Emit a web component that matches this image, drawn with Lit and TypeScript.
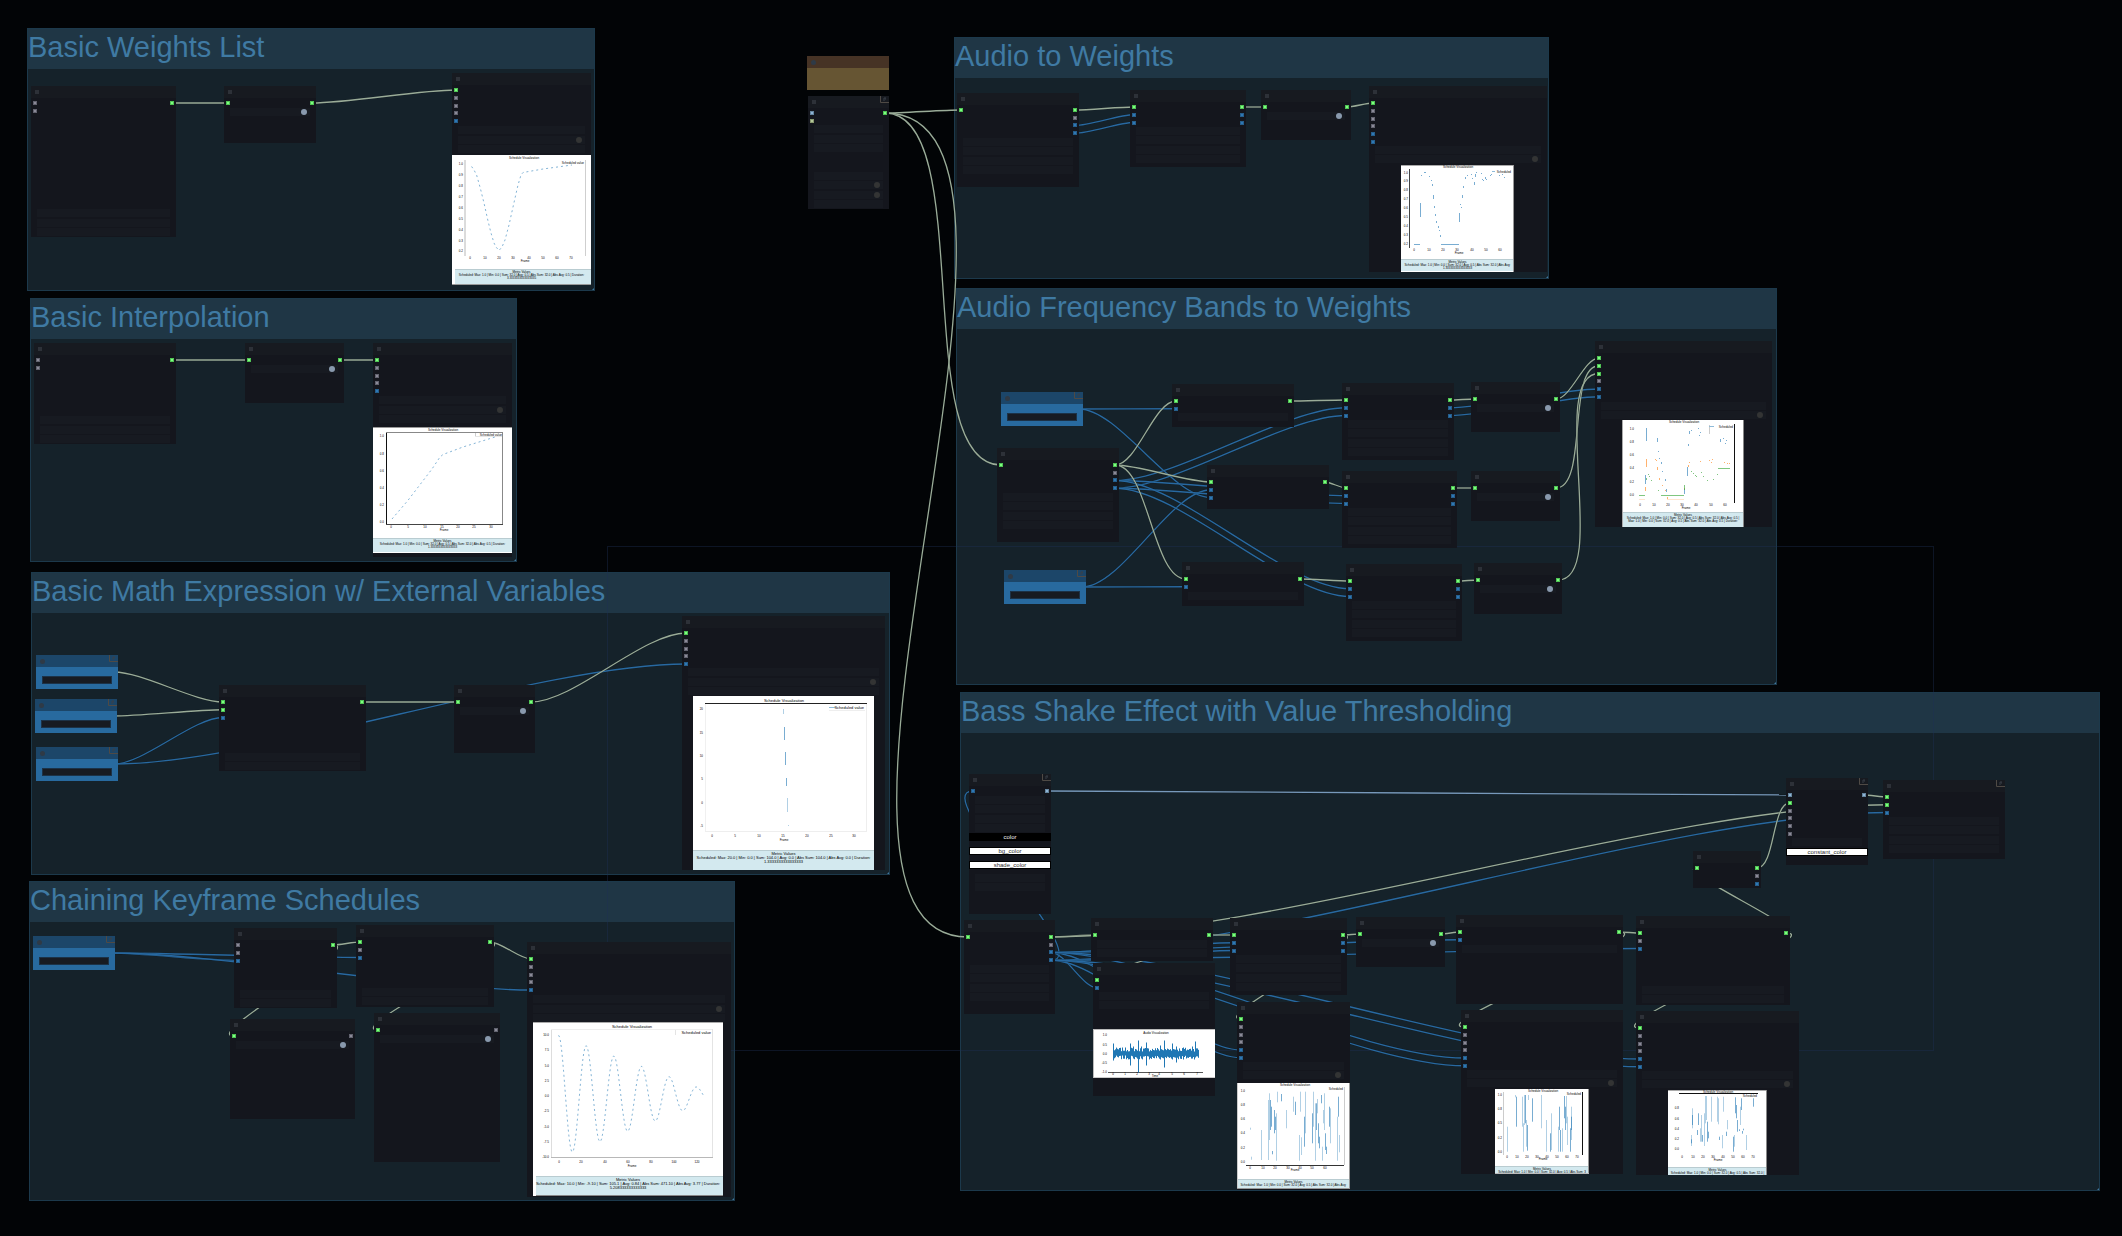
import { LitElement, html, svg, css, nothing } from "lit";
import { customElement, property } from "lit/decorators.js";
import { classMap } from "lit/directives/class-map.js";
import { styleMap } from "lit/directives/style-map.js";

type Kind = "op" | "value" | "note";

interface NodeSpec {
  id: string;
  x: number;
  y: number;
  w: number;
  h: number;
  kind?: Kind;
  /** One letter per slot: g = weights, n = unconnected, b = number, l = mask, k = video info. */
  ins?: string;
  outs?: string;
  /** [top, rows], where rows holds one letter per widget: w = field, t = toggle off, T = toggle on. */
  widgets?: [number, string][];
  /** [top, label, dark?] */
  colors?: [number, string, boolean?][];
  badge?: boolean;
}

interface GroupSpec {
  title: string;
  x: number;
  y: number;
  w: number;
  h: number;
}

const GROUPS: GroupSpec[] = [
  { title: "Basic Weights List", x: 27, y: 28, w: 568, h: 263 },
  { title: "Basic Interpolation", x: 30, y: 298, w: 487, h: 264 },
  { title: "Basic Math Expression w/ External Variables", x: 31, y: 572, w: 859, h: 303 },
  { title: "Chaining Keyframe Schedules", x: 29, y: 881, w: 706, h: 320 },
  { title: "Audio to Weights", x: 954, y: 37, w: 595, h: 242 },
  { title: "Audio Frequency Bands to Weights", x: 956, y: 288, w: 821, h: 397 },
  { title: "Bass Shake Effect with Value Thresholding", x: 960, y: 692, w: 1140, h: 499 },
];

const NODES: NodeSpec[] = [
  { id: "list", x: 31, y: 86, w: 145, h: 151, ins: "nn", outs: "g", widgets: [[123, "www"]] },
  { id: "listToggle", x: 224, y: 86, w: 92, h: 57, ins: "g", outs: "g", widgets: [[22, "T"]] },
  { id: "listView", x: 452, y: 73, w: 139, h: 212, ins: "gnnnb", widgets: [[53, "wtw"]] },

  { id: "interp", x: 34, y: 343, w: 142, h: 101, ins: "nn", outs: "g", widgets: [[73, "www"]] },
  { id: "interpToggle", x: 245, y: 343, w: 99, h: 60, ins: "g", outs: "g", widgets: [[22, "T"]] },
  { id: "interpView", x: 373, y: 343, w: 139, h: 214, ins: "gnnnb", widgets: [[53, "wtw"]] },

  { id: "varA", x: 36, y: 655, w: 82, h: 34, kind: "value", badge: true },
  { id: "varB", x: 35, y: 699, w: 82, h: 34, kind: "value", badge: true },
  { id: "varC", x: 36, y: 747, w: 82, h: 34, kind: "value", badge: true },
  { id: "math", x: 219, y: 685, w: 147, h: 86, ins: "ggb", outs: "g", widgets: [[68, "ww"]] },
  { id: "mathToggle", x: 454, y: 685, w: 81, h: 68, ins: "g", outs: "g", widgets: [[22, "T"]] },
  { id: "mathView", x: 682, y: 616, w: 203, h: 254, ins: "gnnnb", widgets: [[52, "wtw"]] },

  { id: "frames", x: 33, y: 936, w: 82, h: 34, kind: "value", badge: true },
  { id: "key1", x: 234, y: 928, w: 103, h: 80, ins: "nnb", outs: "g", widgets: [[62, "ww"]] },
  { id: "key2", x: 356, y: 925, w: 138, h: 82, ins: "gnb", outs: "g", widgets: [[63, "ww"]] },
  { id: "key3", x: 230, y: 1019, w: 125, h: 100, ins: "g", outs: "n", widgets: [[22, "T"]] },
  { id: "key4", x: 374, y: 1013, w: 126, h: 149, ins: "g", outs: "n", widgets: [[22, "T"]] },
  { id: "keyView", x: 527, y: 942, w: 204, h: 255, ins: "gnnnb", widgets: [[53, "wtw"]] },

  { id: "note", x: 807, y: 56, w: 82, h: 34, kind: "note" },
  { id: "load", x: 808, y: 96, w: 81, h: 113, ins: "lk", outs: "g", widgets: [[29, "www"], [76, "wttw"]], badge: true },

  { id: "audio", x: 957, y: 93, w: 122, h: 94, ins: "g", outs: "gnbb", widgets: [[45, "wwww"]] },
  { id: "audioWeights", x: 1130, y: 90, w: 116, h: 77, ins: "gbb", outs: "gbb", widgets: [[37, "wwww"]] },
  { id: "audioToggle", x: 1261, y: 90, w: 90, h: 50, ins: "g", outs: "g", widgets: [[22, "T"]] },
  { id: "audioView", x: 1369, y: 86, w: 178, h: 186, ins: "gnnnbb", widgets: [[60, "wt"]] },

  { id: "cutA", x: 1001, y: 392, w: 82, h: 34, kind: "value", badge: true },
  { id: "cutB", x: 1004, y: 570, w: 82, h: 34, kind: "value", badge: true },
  { id: "bands", x: 997, y: 448, w: 122, h: 94, ins: "g", outs: "gnbb", widgets: [[45, "wwww"]] },
  { id: "low", x: 1172, y: 384, w: 122, h: 43, ins: "gb", outs: "g", widgets: [[29, "w"]] },
  { id: "mid", x: 1207, y: 465, w: 122, h: 44, ins: "gbb", outs: "g" },
  { id: "high", x: 1182, y: 562, w: 122, h: 44, ins: "gb", outs: "g", widgets: [[30, "w"]] },
  { id: "lowW", x: 1342, y: 383, w: 112, h: 77, ins: "gbb", outs: "gbb", widgets: [[37, "wwww"]] },
  { id: "midW", x: 1342, y: 471, w: 115, h: 77, ins: "gbb", outs: "gbb", widgets: [[37, "wwww"]] },
  { id: "highW", x: 1346, y: 564, w: 116, h: 77, ins: "gbb", outs: "gbb", widgets: [[37, "wwww"]] },
  { id: "lowT", x: 1471, y: 382, w: 89, h: 50, ins: "g", outs: "g", widgets: [[22, "T"]] },
  { id: "midT", x: 1471, y: 471, w: 89, h: 50, ins: "g", outs: "g", widgets: [[22, "T"]] },
  { id: "highT", x: 1474, y: 563, w: 88, h: 51, ins: "g", outs: "g", widgets: [[22, "T"]] },
  { id: "bandView", x: 1595, y: 341, w: 177, h: 186, ins: "gggnbb", widgets: [[61, "wt"]] },

  {
    id: "shape", x: 969, y: 774, w: 82, h: 140, ins: "b", outs: "l", badge: true,
    widgets: [[22, "wwww"], [100, "ww"]],
    colors: [[59, "color", true], [73, "bg_color"], [87, "shade_color"]],
  },
  { id: "bass", x: 964, y: 920, w: 91, h: 94, ins: "g", outs: "gnbb", widgets: [[45, "wwww"]] },
  { id: "filter", x: 1091, y: 918, w: 122, h: 43, ins: "g", outs: "g", widgets: [[22, "ww"]] },
  { id: "wave", x: 1093, y: 963, w: 122, h: 133, ins: "gb", widgets: [[29, "ww"]] },
  { id: "bassW", x: 1230, y: 918, w: 117, h: 77, ins: "gbb", outs: "gbb", widgets: [[37, "wwww"]] },
  { id: "bassView", x: 1237, y: 1002, w: 113, h: 188, ins: "gnnnbb", widgets: [[60, "wt"]] },
  { id: "bassT", x: 1356, y: 917, w: 89, h: 50, ins: "g", outs: "g", widgets: [[22, "T"]] },
  { id: "thresh", x: 1456, y: 915, w: 167, h: 89, ins: "gb", outs: "g", widgets: [[30, "w"]] },
  { id: "threshView", x: 1461, y: 1010, w: 162, h: 164, ins: "gnnnbb", widgets: [[60, "wt"]] },
  { id: "smooth", x: 1636, y: 916, w: 154, h: 89, ins: "gnb", outs: "g", widgets: [[70, "ww"]] },
  { id: "smoothView", x: 1636, y: 1011, w: 163, h: 164, ins: "gnnnbb", widgets: [[60, "wt"]] },
  { id: "split", x: 1693, y: 851, w: 68, h: 37, ins: "g", outs: "gnb" },
  {
    id: "shake", x: 1786, y: 778, w: 82, h: 87, ins: "lgnnnn", outs: "l", badge: true,
    widgets: [[60, "w"]],
    colors: [[70, "constant_color"]],
  },
  { id: "combine", x: 1883, y: 780, w: 122, h: 79, ins: "ggb", widgets: [[37, "wwww"]], badge: true },
];

/** source node, output slot, target node, input slot, colour class */
type Link = [string, number, string, number, ("num" | "mask")?];

const LINKS: Link[] = [
  ["list", 0, "listToggle", 0],
  ["listToggle", 0, "listView", 0],
  ["interp", 0, "interpToggle", 0],
  ["interpToggle", 0, "interpView", 0],
  ["varA", 0, "math", 0],
  ["varB", 0, "math", 1],
  ["varC", 0, "math", 2, "num"],
  ["varC", 0, "mathView", 4, "num"],
  ["math", 0, "mathToggle", 0],
  ["mathToggle", 0, "mathView", 0],
  ["frames", 0, "key1", 2, "num"],
  ["frames", 0, "key2", 2, "num"],
  ["frames", 0, "keyView", 4, "num"],
  ["key1", 0, "key2", 0],
  ["key1", 0, "key3", 0],
  ["key2", 0, "keyView", 0],
  ["key2", 0, "key4", 0],
  ["load", 0, "audio", 0],
  ["load", 0, "bands", 0],
  ["load", 0, "bass", 0],
  ["audio", 0, "audioWeights", 0],
  ["audio", 2, "audioWeights", 1, "num"],
  ["audio", 3, "audioWeights", 2, "num"],
  ["audioWeights", 0, "audioToggle", 0],
  ["audioToggle", 0, "audioView", 0],
  ["cutA", 0, "low", 1, "num"],
  ["cutA", 0, "mid", 2, "num"],
  ["cutB", 0, "mid", 1, "num"],
  ["cutB", 0, "high", 1, "num"],
  ["bands", 2, "lowW", 1, "num"],
  ["bands", 3, "lowW", 2, "num"],
  ["bands", 2, "midW", 1, "num"],
  ["bands", 3, "midW", 2, "num"],
  ["bands", 2, "highW", 1, "num"],
  ["bands", 3, "highW", 2, "num"],
  ["bands", 0, "low", 0],
  ["bands", 0, "mid", 0],
  ["bands", 0, "high", 0],
  ["low", 0, "lowW", 0],
  ["mid", 0, "midW", 0],
  ["high", 0, "highW", 0],
  ["lowW", 0, "lowT", 0],
  ["midW", 0, "midT", 0],
  ["highW", 0, "highT", 0],
  ["lowW", 1, "bandView", 4, "num"],
  ["lowW", 2, "bandView", 5, "num"],
  ["lowT", 0, "bandView", 0],
  ["midT", 0, "bandView", 1],
  ["highT", 0, "bandView", 2],
  ["bass", 3, "shape", 0, "num"],
  ["bass", 2, "bassW", 1, "num"],
  ["bass", 3, "bassW", 2, "num"],
  ["bass", 2, "wave", 1, "num"],
  ["bass", 2, "bassView", 4, "num"],
  ["bass", 3, "bassView", 5, "num"],
  ["bass", 2, "thresh", 1, "num"],
  ["bass", 3, "smooth", 2, "num"],
  ["bass", 2, "threshView", 4, "num"],
  ["bass", 3, "threshView", 5, "num"],
  ["bass", 2, "smoothView", 4, "num"],
  ["bass", 3, "smoothView", 5, "num"],
  ["bass", 2, "combine", 2, "num"],
  ["bass", 0, "filter", 0],
  ["bass", 0, "combine", 1],
  ["filter", 0, "bassW", 0],
  ["filter", 0, "wave", 0],
  ["bassW", 0, "bassT", 0],
  ["bassW", 0, "bassView", 0],
  ["bassT", 0, "thresh", 0],
  ["thresh", 0, "smooth", 0],
  ["thresh", 0, "threshView", 0],
  ["smooth", 0, "smoothView", 0],
  ["smooth", 0, "split", 0],
  ["split", 0, "shake", 1],
  ["shape", 0, "shake", 0, "mask"],
  ["shake", 0, "combine", 0],
];

const SLOT_PITCH = 7.75;
const ROW_PITCH = 9.3;

const byId = new Map(NODES.map((n) => [n.id, n]));

function linkPath([from, out, to, input]: Link): string {
  const a = byId.get(from)!;
  const b = byId.get(to)!;
  const x1 = a.x + a.w - 4;
  const y1 = a.y + 17 + out * SLOT_PITCH;
  const x2 = b.x + 4;
  const y2 = b.y + 17 + input * SLOT_PITCH;
  const reach = Math.hypot(x2 - x1, y2 - y1) / 4;
  return `M${x1} ${y1}C${x1 + reach} ${y1} ${x2 - reach} ${y2} ${x2} ${y2}`;
}

interface ChartSpec {
  x: number;
  y: number;
  w: number;
  h: number;
  title: string;
  titleAt: [number, number];
  size?: number;
  /** x1, y1, x2, y2, colour */
  axes: [number, number, number, number, string][];
  yTicks: [number, number[], string[]];
  xTicks: [number, number[], string[]];
  xLabel?: [number, number, string];
  legend?: [number, number, string];
  /** path data, class */
  series: [string, string][];
  panel?: { x: number; y: number; h: number; lines: string[] };
}

/** Vertical strokes from thirds of a pixel, snapped to the middle of a column. */
const bars = (ox: number, oy: number, list: number[][]): string =>
  list.map(([x, a, b]) => `M${Math.floor(ox + x / 3) + 0.5} ${(oy + a / 3).toFixed(1)}V${(oy + b / 3).toFixed(1)}`).join("");

const poly = (pts: number[][]): string => "M" + pts.map((p) => p.join(" ")).join("L");

const dots = (pts: number[][]): string => pts.map(([x, y, y2]) => `M${Math.floor(x) + 0.5} ${y}V${y2 ?? y + 1}`).join("");

function damped(): string {
  const pts: number[][] = [];
  for (let dx = 0; dx <= 145; dx++) {
    const y = 1096.3 - (61 - 0.374 * dx) * Math.cos((2 * Math.PI * dx) / 27.7);
    pts.push([558.6 + dx, +y.toFixed(1)]);
  }
  return poly(pts);
}

function waveform(): string {
  const peaks: Record<number, [number, number]> = {
    0: [10, 7], 17: [10, 12], 20: [7, 5], 25: [13, 19], 28: [7, 5], 33: [11, 12], 47: [8, 6],
    51: [13, 14], 59: [10, 6], 63: [7, 9], 70: [6, 6], 79: [7, 5], 82: [12, 4],
  };
  let d = "";
  let seed = 7;
  for (let i = 0; i < 86; i++) {
    seed = (seed * 1103515245 + 12345) % 2147483648;
    const r = seed / 2147483648;
    const [up, down] = peaks[i] ?? [2 + r * 4, 2 + (1 - r) * 4];
    d += `M${1113.5 + i} ${(1053.5 - up).toFixed(1)}V${(1053.5 + down).toFixed(1)}`;
  }
  return d;
}

const decimals = ["1.0", "0.9", "0.8", "0.7", "0.6", "0.5", "0.4", "0.3", "0.2"];
const unit = ["1.0", "0.8", "0.6", "0.4", "0.2", "0.0"];
const metrics = "Scheduled: Max: 1.0 | Min: 0.0 | Sum: 32.0 | Avg: 0.5 | Abs Sum: 32.0 | Abs Avg: 0.5 | Duration:";
const longMetrics = "Scheduled: Max: 20.0 | Min: 0.0 | Sum: 104.0 | Avg: 0.0 | Abs Sum: 104.0 | Abs Avg: 0.0 | Duration:";

const CHARTS: ChartSpec[] = [
  {
    x: 452, y: 155, w: 139, h: 130, title: "Schedule Visualization", titleAt: [524, 159],
    axes: [[465, 160, 465, 256, "#b8b8b8"], [585.5, 160, 585.5, 256, "#cfcfcf"], [452, 284.5, 591, 284.5, "#999"]],
    yTicks: [463, [164, 175, 186, 197, 208, 219, 230, 241, 251], decimals],
    xTicks: [259, [470, 485, 499, 513, 529, 543, 557, 571], ["0", "10", "20", "30", "40", "50", "60", "70"]],
    xLabel: [525, 262, "Frame"], legend: [584, 164, "Scheduled value"],
    series: [[
      poly([[471.6, 166.5], [474, 170], [476.6, 175], [480, 187], [484, 203], [488, 221], [491, 233], [494, 243], [496, 247], [499, 250.5], [502, 247], [505, 240], [509, 225], [513, 207], [518, 185], [521, 175], [523, 172.5], [543, 169], [572, 165]]),
      "dash",
    ]],
    panel: { x: 455, y: 269, h: 15, lines: ["Metric Values", metrics, "3.3333333333333335"] },
  },
  {
    x: 373, y: 427, w: 139, h: 126, title: "Schedule Visualization", titleAt: [443, 431],
    axes: [
      [386.5, 432, 386.5, 525, "#111"], [386, 432.5, 503, 432.5, "#888"], [502.5, 432, 502.5, 525, "#888"],
      [386, 524.5, 503, 524.5, "#444"], [373, 427.5, 512, 427.5, "#999"], [475.5, 433, 475.5, 437, "#ccc"], [475, 436.5, 502, 436.5, "#e6e6e6"],
    ],
    yTicks: [384, [436, 454, 471, 488, 505, 522], unit],
    xTicks: [528, [391, 408, 425, 442, 458, 474, 491], ["0", "5", "10", "15", "20", "25", "30"]],
    xLabel: [444, 531, "Frame"], legend: [502, 436, "Scheduled value"],
    series: [[poly([[392, 519], [407.7, 500.7], [432, 469], [440, 457], [443, 454.5], [463, 447], [495, 437]]), "dash"]],
    panel: { x: 373, y: 538, h: 14, lines: ["Metric Values", metrics, "1.3333333333333333"] },
  },
  {
    x: 693, y: 696, w: 181, h: 174, title: "Schedule Visualization", titleAt: [784, 702], size: 4,
    axes: [
      [705, 703.5, 867, 703.5, "#222"], [705.5, 704, 705.5, 832, "#f0f0f0"], [866.5, 704, 866.5, 832, "#eee"], [705, 831.5, 867, 831.5, "#eee"],
      [829, 707.5, 835, 707.5, "#8fbbd9"], [829, 710.5, 865, 710.5, "#eee"],
    ],
    yTicks: [703, [709, 733, 756, 779, 803, 826], ["20", "15", "10", "5", "0", "-5"]],
    xTicks: [837, [712, 735, 759, 783, 807, 831, 854], ["0", "5", "10", "15", "20", "25", "30"]],
    xLabel: [784, 841, "Frame"], legend: [864, 709, "Scheduled value"],
    series: [
      [dots([[783, 709, 714], [787, 798, 812], [788, 825, 826]]), "bar faint"],
      [dots([[784, 727, 740], [785, 752, 765], [786, 778, 786]]), "bar"],
    ],
    panel: { x: 693, y: 850, h: 20, lines: ["Metric Values", longMetrics, "1.3333333333333333"] },
  },
  {
    x: 533, y: 1022, w: 190, h: 174, title: "Schedule Visualization", titleAt: [632, 1028], size: 4,
    axes: [
      [551.5, 1029, 551.5, 1157, "#ddd"], [551, 1029.5, 713, 1029.5, "#eee"], [712.5, 1029, 712.5, 1157, "#e4e4e4"], [551, 1157.5, 713, 1157.5, "#b8b8b8"],
      [675.5, 1030, 675.5, 1035, "#e4e4e4"], [533, 1022.5, 723, 1022.5, "#aaa"], [536, 1195.5, 723, 1195.5, "#888"],
    ],
    yTicks: [549, [1035, 1050, 1066, 1081, 1096, 1111, 1127, 1142, 1157], ["10.0", "7.5", "5.0", "2.5", "0.0", "-2.5", "-5.0", "-7.5", "-10.0"]],
    xTicks: [1163, [559, 581, 605, 628, 651, 674, 697], ["0", "20", "40", "60", "80", "100", "120"]],
    xLabel: [632, 1167, "Frame"], legend: [711, 1034, "Scheduled value"],
    series: [[damped(), "dash"]],
    panel: { x: 536, y: 1176, h: 19, lines: ["Metric Values", "Scheduled: Max: 10.0 | Min: -9.10 | Sum: 105.1 | Avg: 0.84 | Abs Sum: 471.10 | Abs Avg: 3.77 | Duration:", "5.208333333333333"] },
  },
  {
    x: 1401, y: 165, w: 113, h: 107, title: "Schedule Visualization", titleAt: [1458, 168],
    axes: [[1409.5, 169, 1409.5, 248, "#444"], [1492, 171.5, 1495, 171.5, "#8fbbd9"], [1401, 165.5, 1514, 165.5, "#aaa"], [1513.5, 165, 1513.5, 272, "#999"]],
    yTicks: [1408, [173, 181, 190, 199, 208, 217, 226, 235, 244], decimals],
    xTicks: [251, [1414, 1429, 1443, 1457, 1472, 1486, 1500], ["0", "10", "20", "30", "40", "50", "60"]],
    xLabel: [1459, 254, "Frame"], legend: [1511, 173, "Scheduled"],
    series: [
      ["M1414 244.5H1420M1441 244.5H1459", "bar"],
      [dots([[1420, 203, 217], [1421, 175], [1424, 172], [1425, 172], [1429, 176], [1431, 180], [1432, 184, 186], [1433, 195, 199], [1434, 206, 208], [1435, 214, 216], [1436, 221, 223], [1438, 226, 228], [1439, 230], [1440, 235, 237], [1459, 213, 222], [1460, 204], [1461, 207], [1462, 195, 198], [1463, 186, 188], [1465, 177, 179], [1467, 175], [1471, 174], [1472, 178], [1474, 182, 185], [1475, 174, 177], [1476, 172], [1481, 173], [1482, 179], [1483, 180], [1485, 177, 179], [1486, 179], [1490, 175], [1491, 174], [1499, 175], [1502, 174], [1504, 177]]), "bar"],
    ],
    panel: { x: 1401, y: 259, h: 12, lines: ["Metric Values", metrics.slice(0, 80), "1.3333333333333333"] },
  },
  {
    x: 1622, y: 420, w: 122, h: 107, title: "Schedule Visualization", titleAt: [1684, 423],
    axes: [[1734.5, 424, 1734.5, 503, "#111"], [1622.5, 420, 1622.5, 527, "#aaa"], [1743.5, 420, 1743.5, 527, "#888"], [1709.5, 425, 1709.5, 434, "#ccc"], [1709, 426.5, 1714, 426.5, "#8fbbd9"]],
    yTicks: [1634, [429, 442, 455, 468, 482, 495], unit],
    xTicks: [506, [1640, 1654, 1668, 1682, 1696, 1711, 1725], ["0", "10", "20", "30", "40", "50", "60"]],
    xLabel: [1686, 509, "Frame"], legend: [1733, 428, "Scheduled"],
    series: [
      [dots([[1646, 428, 441], [1657, 438, 442], [1658, 451, 452], [1659, 458], [1661, 462, 464], [1662, 471, 472], [1665, 479, 481], [1666, 489, 492], [1684, 489, 494], [1687, 467, 476], [1688, 444, 446], [1689, 431, 434], [1691, 430], [1698, 428], [1700, 432], [1699, 435], [1720, 439, 442], [1723, 438], [1726, 440], [1725, 443], [1645, 475, 484]]), "bar"],
      [dots([[1646, 459, 467], [1655, 459], [1656, 460], [1657, 467, 470], [1659, 478, 480], [1662, 485], [1665, 490], [1667, 497, 499], [1645, 487, 491], [1684, 488], [1688, 465, 467], [1689, 462], [1700, 461], [1709, 460], [1712, 459], [1711, 462], [1724, 462], [1727, 463], [1729, 463]]), "bar orange"],
      ["M1639 499.5H1645M1667 499.5H1684", "bar pale"],
      ["M1639 495.5H1645M1661 495.5H1684M1718 468.5H1730", "bar green"],
      [dots([[1646, 478, 480], [1648, 474], [1649, 476], [1651, 480], [1658, 490], [1684, 485, 490], [1691, 471], [1693, 473], [1695, 475], [1696, 476], [1701, 472], [1703, 476], [1707, 480], [1713, 479], [1717, 474]]), "bar green"],
    ],
    panel: { x: 1622, y: 512, h: 15, lines: ["Metric Values", metrics.slice(0, 86), metrics.slice(11, 96)] },
  },
  {
    x: 1093, y: 1029, w: 122, h: 49, title: "Audio Visualization", titleAt: [1156, 1034],
    axes: [[1108, 1072.5, 1203, 1072.5, "#555"], [1093, 1029.5, 1215, 1029.5, "#bbb"], [1093, 1077.5, 1215, 1077.5, "#ccc"], [1093.5, 1029, 1093.5, 1078, "#bbb"]],
    yTicks: [1107, [1035, 1045, 1054, 1063, 1072], ["1.0", "0.5", "0.0", "-0.5", "-1.0"]],
    xTicks: [1075, [1113, 1125, 1137, 1149, 1159, 1172, 1184, 1197], ["0", "1", "2", "3", "4", "5", "6", "7"]],
    xLabel: [1155, 1077, "Time"],
    series: [[waveform(), "solid"]],
  },
  {
    x: 1237, y: 1083, w: 113, h: 106, title: "Schedule Visualization", titleAt: [1295, 1086],
    axes: [[1344.5, 1087, 1344.5, 1165, "#ccc"], [1246, 1165.5, 1344, 1165.5, "#333"], [1237.5, 1083, 1237.5, 1189, "#ccc"], [1349.5, 1083, 1349.5, 1189, "#999"], [1237, 1188.5, 1350, 1188.5, "#999"]],
    yTicks: [1245, [1091, 1105, 1119, 1133, 1148, 1162], unit],
    xTicks: [1169, [1250, 1263, 1275, 1288, 1300, 1312, 1325], ["0", "10", "20", "30", "40", "50", "60"]],
    xLabel: [1295, 1171, "Frame"], legend: [1343, 1090, "Scheduled"],
    series: [
      [bars(950, 900, [[901, 683, 689], [904, 770, 779], [935, 690, 780], [956, 600, 780], [980, 640, 782], [982, 575, 607], [1009, 630, 685], [1030, 590, 635], [1048, 705, 782], [1051, 575, 635], [1054, 712, 765], [1066, 575, 700], [1091, 575, 680], [1096, 610, 782], [1102, 597, 640], [1117, 740, 782], [1121, 630, 670], [1123, 580, 690], [1141, 625, 730], [1162, 650, 782], [1168, 705, 757], [959, 580, 720]]), "bar faint"],
      [bars(950, 900, [[962, 600, 690], [965, 620, 680], [967, 753, 763], [974, 630, 700], [977, 650, 690], [994, 582, 604], [1036, 605, 645], [1063, 650, 740], [1088, 640, 730], [1099, 610, 690], [1105, 670, 730], [1108, 710, 745], [1114, 585, 610], [1126, 700, 750], [1129, 740, 762], [1138, 620, 680], [1165, 590, 650]]), "bar"],
    ],
    panel: { x: 1238, y: 1179, h: 9, lines: ["Metric Values", metrics.slice(0, 80)] },
  },
  {
    x: 1495, y: 1089, w: 94, h: 85, title: "Schedule Visualization", titleAt: [1543, 1092],
    axes: [[1582.5, 1092, 1582.5, 1155, "#111"], [1503.5, 1092, 1503.5, 1155, "#ccc"], [1588.5, 1089, 1588.5, 1174, "#999"], [1495, 1173.5, 1589, 1173.5, "#bbb"]],
    yTicks: [1502, [1095, 1109, 1123, 1138, 1152], ["1.0", "0.8", "0.5", "0.2", "0.0"]],
    xTicks: [1158, [1507, 1517, 1527, 1537, 1547, 1557, 1567, 1577], ["0", "10", "20", "30", "40", "50", "60", "70"]],
    xLabel: [1543, 1160, "Frame"], legend: [1581, 1095, "Scheduled"],
    series: [
      [bars(1340, 880, [[502, 740, 815], [547, 650, 740], [550, 730, 815], [559, 720, 800], [565, 645, 660], [604, 645, 745], [619, 720, 815], [634, 700, 810], [655, 740, 815], [667, 745, 815], [679, 648, 730], [682, 710, 795], [694, 680, 780], [527, 645, 652], [553, 645, 735]]), "bar faint"],
      [bars(1340, 880, [[529, 650, 740], [556, 645, 730], [562, 735, 812], [577, 655, 725], [631, 760, 815], [658, 680, 750], [661, 750, 815], [673, 648, 715], [676, 680, 750], [691, 745, 815], [694, 710, 750]]), "bar"],
    ],
    panel: { x: 1495, y: 1166, h: 7, lines: ["Metric Values", metrics.slice(0, 66)] },
  },
  {
    x: 1668, y: 1090, w: 99, h: 85, title: "Schedule Visualization", titleAt: [1718, 1093],
    axes: [[1679, 1093.5, 1758, 1093.5, "#111"], [1668, 1090.5, 1767, 1090.5, "#aaa"], [1766.5, 1090, 1766.5, 1175, "#888"]],
    yTicks: [1679, [1108, 1119, 1129, 1139, 1149], ["0.8", "0.6", "0.4", "0.2", "0.0"]],
    xTicks: [1158, [1682, 1693, 1703, 1713, 1723, 1733, 1743, 1753], ["0", "10", "20", "30", "40", "50", "60", "70"]],
    xLabel: [1718, 1161, "Frame"], legend: [1757, 1097, "Scheduled"],
    series: [
      [bars(1340, 880, [[1054, 765, 798], [1081, 745, 785], [1084, 705, 785], [1093, 700, 798], [1099, 648, 720], [1114, 650, 725], [1132, 650, 725], [1135, 655, 733], [1147, 765, 805], [1150, 650, 695], [1162, 720, 748], [1183, 765, 800], [1201, 680, 735], [1219, 765, 810], [1057, 685, 745], [1096, 648, 730]]), "bar faint"],
      [bars(1340, 880, [[1057, 705, 735], [1072, 750, 765], [1075, 700, 735], [1087, 765, 785], [1102, 725, 785], [1105, 755, 775], [1138, 770, 780], [1159, 755, 768], [1180, 770, 815], [1186, 652, 700], [1189, 675, 715], [1192, 720, 755], [1198, 748, 753], [1204, 655, 690], [1207, 753, 761], [1210, 746, 751], [1240, 655, 680], [1054, 778, 790]]), "bar"],
    ],
    panel: { x: 1668, y: 1167, h: 8, lines: ["Metric Values", metrics.slice(0, 72)] },
  },
];

@customElement("graph-node")
class GraphNode extends LitElement {
  @property({ attribute: false }) spec!: NodeSpec;

  static styles = css`
    :host { display: block; position: absolute; }
    * { box-sizing: border-box; }
    .node {
      position: relative;
      height: 100%;
      background: #14161d;
    }
    .head {
      display: flex;
      align-items: center;
      height: 12px;
      padding-left: 4px;
      background: #171a20;
    }
    .mark { width: 4px; height: 4px; background: #2d3138; }
    .value { background: #286a9f; }
    .value .head { background: #1c4669; }
    .note { background: #665533; }
    .note .head { background: #463325; }
    .value .mark, .note .mark { width: 5px; height: 5px; border-radius: 50%; background: #2f3a46; }
    .badge {
      position: absolute;
      right: 0;
      top: 0;
      display: block;
      width: 9px;
      height: 7px;
    }
    .slots {
      position: absolute;
      top: 15px;
      display: flex;
      flex-direction: column;
      justify-content: space-between;
    }
    .in { left: 2px; }
    .out { right: 2px; }
    .slot { width: 4px; height: 4px; border: 1px solid; }
    .g { background: #7dff80; border-color: #50c455; }
    .n { background: #8b8a98; border-color: #62636f; }
    .b { background: #2e77b5; border-color: #265f8c; }
    .l { background: #8fb4d6; border-color: #66869f; }
    .k { background: #b4c79a; border-color: #87976f; }
    .rows {
      position: absolute;
      left: 6px;
      right: 6px;
      display: flex;
      flex-direction: column;
      justify-content: space-between;
    }
    .row {
      display: flex;
      align-items: center;
      justify-content: flex-end;
      height: 8px;
      padding-right: 3px;
      background: #171a21;
    }
    .toggle {
      appearance: none;
      width: 6px;
      height: 6px;
      margin: 0;
      border-radius: 50%;
      background: #333434;
    }
    .toggle:checked { background: #8999ad; }
    .field {
      display: block;
      width: 70px;
      height: 8px;
      margin: 9px auto 0;
      padding: 0;
      border: 1px solid #1c3247;
      border-radius: 0;
      background: #171b22;
      color: #ddd;
      font: 6px "Liberation Sans", Arial, sans-serif;
    }
    .swatch {
      position: absolute;
      left: 0;
      width: 100%;
      height: 8px;
      padding: 0;
      border: 1px solid #000;
      border-radius: 0;
      background: #fff;
      color: #333;
      font: 6px/6px "Liberation Sans", Arial, sans-serif;
      text-align: center;
    }
    .dark { background: #000; color: #eee; }
  `;

  private slots(kinds: string, side: string) {
    const height = 4 + Math.round((kinds.length - 1) * SLOT_PITCH);
    return html`<div class="slots ${side}" style=${styleMap({ height: `${height}px` })}>
      ${[...kinds].map((k) => html`<i class="slot ${k}"></i>`)}
    </div>`;
  }

  private rows([top, rows]: [number, string]) {
    const height = 8 + Math.round((rows.length - 1) * ROW_PITCH);
    return html`<div class="rows" style=${styleMap({ top: `${top}px`, height: `${height}px` })}>
      ${[...rows].map((r) => html`<div class="row">
        ${r === "w" ? nothing : html`<input class="toggle" type="checkbox" aria-label="Toggle" .checked=${r === "T"} />`}
      </div>`)}
    </div>`;
  }

  render() {
    const s = this.spec;
    const kind = s.kind ?? "op";
    return html`<div class=${classMap({ node: true, value: kind === "value", note: kind === "note" })}>
      <div class="head"><i class="mark"></i></div>
      ${s.badge
        ? html`<svg class="badge" viewBox="0 0 9 7" aria-hidden="true">
            <path d="M.5 0V6.5H9" fill="none" stroke="#4f4a45" /><path d="M4 5V2H6M5 3H6" fill="none" stroke="#3a4048" />
          </svg>`
        : nothing}
      ${kind === "value" ? html`<input class="field" type="text" aria-label="Value" />` : nothing}
      ${s.ins ? this.slots(s.ins, "in") : nothing}
      ${s.outs ? this.slots(s.outs, "out") : nothing}
      ${(s.widgets ?? []).map((w) => this.rows(w))}
      ${(s.colors ?? []).map(([top, label, dark]) => html`<button
        class=${classMap({ swatch: true, dark: !!dark })}
        style=${styleMap({ top: `${top}px` })}
      >${label}</button>`)}
    </div>`;
  }
}

@customElement("schedule-chart")
class ScheduleChart extends LitElement {
  @property({ attribute: false }) spec!: ChartSpec;

  static styles = css`
    :host { display: block; position: absolute; background: #fff; }
    svg { display: block; width: 100%; height: 100%; }
    text { font-family: "Liberation Sans", Arial, sans-serif; fill: #000; }
    .three { font-size: 3px; }
    .four { font-size: 4px; }
    .mid { text-anchor: middle; }
    .end { text-anchor: end; }
    path { fill: none; stroke: #1f77b4; }
    .dash { stroke-width: 1; stroke-dasharray: 2 3; opacity: 0.55; }
    .bar { opacity: 0.6; }
    .faint { opacity: 0.35; }
    .orange { stroke: #ff7f0e; }
    .green { stroke: #2ca02c; }
    .pale { stroke: #ff7f0e; opacity: 0.2; }
    .panel { fill: #d3e9ef; }
  `;

  render() {
    const c = this.spec;
    const size = c.size === 4 ? "four" : "three";
    const cx = c.x + c.w / 2;
    return html`<svg viewBox="${c.x} ${c.y} ${c.w} ${c.h}" role="img" aria-label=${c.title}>
      ${c.panel
        ? svg`<rect class="panel" x=${c.panel.x} y=${c.panel.y} width=${c.x + c.w - c.panel.x} height=${c.panel.h} />
            <line x1=${c.panel.x} x2=${c.x + c.w} y1=${c.panel.y + 0.5} y2=${c.panel.y + 0.5} stroke="#b9ccd1" />
            ${c.panel.lines.map((t, i) => svg`<text class="mid ${size}" x=${cx} y=${c.panel!.y + (size === "four" ? 5 + i * 4 : 4 + i * 3)}>${t}</text>`)}`
        : nothing}
      ${c.axes.map(([x1, y1, x2, y2, stroke]) => svg`<line x1=${x1} y1=${y1} x2=${x2} y2=${y2} stroke=${stroke} />`)}
      ${c.series.map(([d, cls]) => svg`<path class=${cls} d=${d} />`)}
      <text class="mid ${size}" x=${c.titleAt[0]} y=${c.titleAt[1]}>${c.title}</text>
      ${c.yTicks[1].map((y, i) => svg`<text class="end three" x=${c.yTicks[0]} y=${y + 1}>${c.yTicks[2][i] ?? ""}</text>`)}
      ${c.xTicks[1].map((x, i) => svg`<text class="mid three" x=${x} y=${c.xTicks[0]}>${c.xTicks[2][i] ?? ""}</text>`)}
      ${c.xLabel ? svg`<text class="mid three" x=${c.xLabel[0]} y=${c.xLabel[1]}>${c.xLabel[2]}</text>` : nothing}
      ${c.legend ? svg`<text class="end ${size}" x=${c.legend[0]} y=${c.legend[1]}>${c.legend[2]}</text>` : nothing}
    </svg>`;
  }
}

@customElement("app-root")
class AppRoot extends LitElement {
  static styles = css`
    :host {
      display: block;
      position: relative;
      min-height: 100vh;
      overflow: hidden;
      background: #020406;
      font-family: "Liberation Sans", Arial, sans-serif;
    }
    * { box-sizing: border-box; }
    .group {
      position: absolute;
      border: 1px solid #1c394b;
      background: #15222a;
    }
    .group::after {
      content: "";
      position: absolute;
      right: 0;
      bottom: 0;
      border: 1px solid;
      border-color: transparent #3f789e #3f789e transparent;
    }
    .title {
      margin: 0;
      height: 40px;
      background: #1f3645;
      color: #3f7aa3;
      font-size: 29px;
      font-weight: 400;
      line-height: 37px;
      white-space: nowrap;
    }
    .wires {
      position: absolute;
      left: 0;
      top: 0;
      width: 100%;
      height: 100%;
    }
    .frame { fill: none; stroke: #1d3055; stroke-opacity: 0.4; }
    .casing { fill: none; stroke: #0a0f12; stroke-opacity: 0.3; stroke-width: 2; }
    .wire { fill: none; stroke: #9aac98; stroke-width: 1.3; }
    .num { stroke: #2869a1; }
    .mask { stroke: #7799bb; }
  `;

  private box(b: { x: number; y: number; w: number; h: number }) {
    return styleMap({ left: `${b.x}px`, top: `${b.y}px`, width: `${b.w}px`, height: `${b.h}px` });
  }

  render() {
    return html`
      ${GROUPS.map((g) => html`<section class="group" style=${this.box(g)}><h2 class="title">${g.title}</h2></section>`)}
      <svg class="wires" aria-hidden="true">
        <rect class="frame" x="607.5" y="546.5" width="1326" height="504" />
        ${LINKS.map((l) => {
          const d = linkPath(l);
          return svg`<path class="casing" d=${d} /><path class="wire ${l[4] ?? ""}" d=${d} />`;
        })}
      </svg>
      ${NODES.map((n) => html`<graph-node .spec=${n} style=${this.box(n)}></graph-node>`)}
      ${CHARTS.map((c) => html`<schedule-chart .spec=${c} style=${this.box(c)}></schedule-chart>`)}
    `;
  }
}
